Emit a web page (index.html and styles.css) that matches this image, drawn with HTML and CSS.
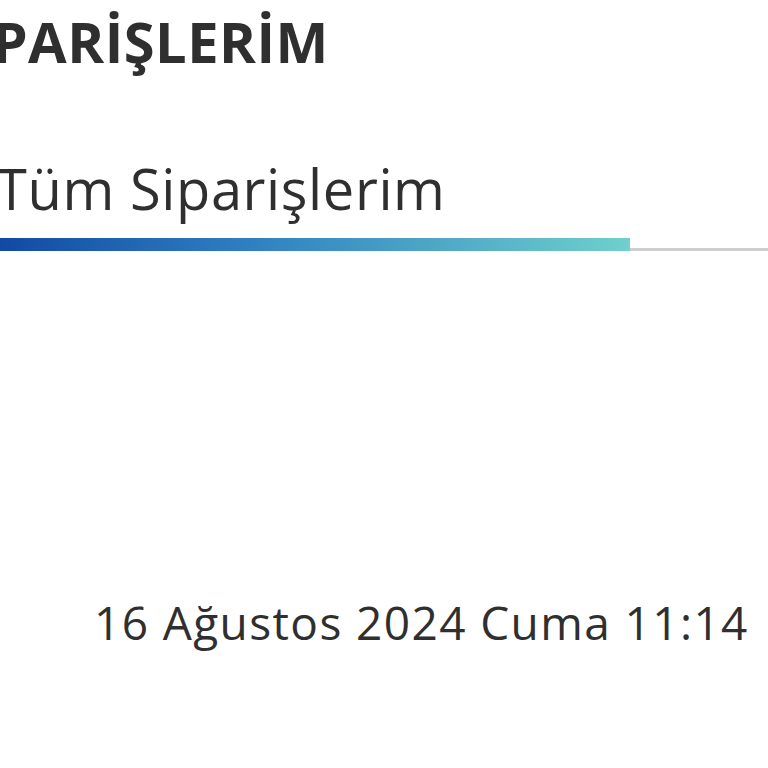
FILE: index.html
```html
<!DOCTYPE html>
<html lang="tr">

<head>
  <meta charset="utf-8" />
  <meta name="viewport" content="width=device-width, initial-scale=1" />
  <title>Siparişlerim</title>
  <link rel="stylesheet" href="styles.css">
</head>

<body>
  <div class="orders">
    <h1 class="orders-title">SİPARİŞLERİM</h1>

    <div class="tabs">
      <div class="tab active">Tüm Siparişlerim</div>
    </div>

    <div class="order-list">
      <div class="order-date">16 Ağustos 2024 Cuma 11:14</div>
    </div>
  </div>
</body>

</html>
```

FILE: styles.css
```css
html,
body {
  margin: 0;
  background-color: #ffffff;
  color: #2f2f2f;
  font-family: "Open Sans", "Noto Sans", sans-serif;
}

body {
  overflow: hidden;
}

.orders {
  margin-left: -66px;
  width: 900px;
}

.orders-title {
  margin: 0;
  padding-top: 7px;
  padding-left: 8px;
  font-size: 56px;
  font-weight: 700;
  line-height: 68px;
  letter-spacing: 0.5px;
}

.tabs {
  margin-top: 78px;
  border-bottom: 3px solid #cfcfcf;
  display: flex;
}

.tab {
  width: 696px;
  padding-left: 62px;
  padding-bottom: 25px;
  box-sizing: border-box;
  font-size: 56px;
  line-height: 70px;
  letter-spacing: 0.6px;
  position: relative;
}

/* active tab underline sits over the grey rule */
.tab.active::after {
  content: "";
  position: absolute;
  left: 0;
  right: 0;
  bottom: -3px;
  height: 13px;
  background: linear-gradient(90deg, #0b3b9c 0%, #2f7fc0 45%, #6fd0cc 100%);
}

.order-list {
  padding-top: 341px;
  padding-left: 160px;
}

.order-date {
  font-size: 46px;
  line-height: 60px;
  letter-spacing: 1.4px;
}
```
